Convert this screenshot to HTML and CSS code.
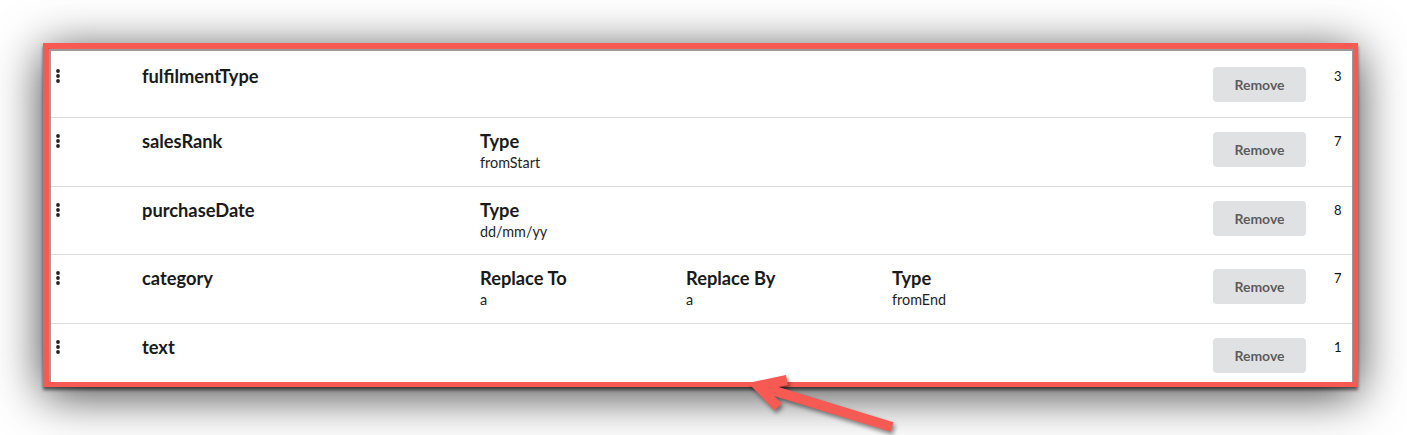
FILE: index.html
```html
<!DOCTYPE html>
<html lang="en">
<head>
<meta charset="utf-8">
<title>Fields</title>
<link rel="stylesheet" href="styles.css">
</head>
<body>
<div class="stage">
  <div class="frame">
    <div class="card">
      <div class="row row--first">
        <div class="handle"><svg class="dots" width="4" height="14" viewBox="0 0 4 14"><circle cx="2" cy="2" r="1.9"/><circle cx="2" cy="7" r="1.9"/><circle cx="2" cy="12" r="1.9"/></svg></div>
        <div class="name">fulfilmentType</div>
        <div class="field"></div>
        <div class="field"></div>
        <div class="field"></div>
        <div class="spacer"></div>
        <button class="btn">Remove</button>
        <div class="num">3</div>
      </div>
      <div class="row">
        <div class="handle"><svg class="dots" width="4" height="14" viewBox="0 0 4 14"><circle cx="2" cy="2" r="1.9"/><circle cx="2" cy="7" r="1.9"/><circle cx="2" cy="12" r="1.9"/></svg></div>
        <div class="name">salesRank</div>
        <div class="field"><div class="label">Type</div><div class="value">fromStart</div></div>
        <div class="field"></div>
        <div class="field"></div>
        <div class="spacer"></div>
        <button class="btn">Remove</button>
        <div class="num">7</div>
      </div>
      <div class="row">
        <div class="handle"><svg class="dots" width="4" height="14" viewBox="0 0 4 14"><circle cx="2" cy="2" r="1.9"/><circle cx="2" cy="7" r="1.9"/><circle cx="2" cy="12" r="1.9"/></svg></div>
        <div class="name">purchaseDate</div>
        <div class="field"><div class="label">Type</div><div class="value">dd/mm/yy</div></div>
        <div class="field"></div>
        <div class="field"></div>
        <div class="spacer"></div>
        <button class="btn">Remove</button>
        <div class="num">8</div>
      </div>
      <div class="row">
        <div class="handle"><svg class="dots" width="4" height="14" viewBox="0 0 4 14"><circle cx="2" cy="2" r="1.9"/><circle cx="2" cy="7" r="1.9"/><circle cx="2" cy="12" r="1.9"/></svg></div>
        <div class="name">category</div>
        <div class="field"><div class="label">Replace To</div><div class="value">a</div></div>
        <div class="field"><div class="label">Replace By</div><div class="value">a</div></div>
        <div class="field"><div class="label">Type</div><div class="value">fromEnd</div></div>
        <div class="spacer"></div>
        <button class="btn">Remove</button>
        <div class="num">7</div>
      </div>
      <div class="row">
        <div class="handle"><svg class="dots" width="4" height="14" viewBox="0 0 4 14"><circle cx="2" cy="2" r="1.9"/><circle cx="2" cy="7" r="1.9"/><circle cx="2" cy="12" r="1.9"/></svg></div>
        <div class="name">text</div>
        <div class="field"></div>
        <div class="field"></div>
        <div class="field"></div>
        <div class="spacer"></div>
        <button class="btn">Remove</button>
        <div class="num">1</div>
      </div>
    </div>
  </div>
  <svg class="arrow" width="1407" height="435" viewBox="0 0 1407 435">
    <line x1="765" y1="388" x2="892" y2="427" />
    <polyline points="787,380 758,386 778,407" />
  </svg>
</div>
</body>
</html>
```

FILE: styles.css
```css
html, body {
  margin: 0;
  padding: 0;
  background: #ffffff;
  overflow: hidden;
}

body {
  font-family: Lato, "Open Sans", Arial, sans-serif;
  color: rgba(0, 0, 0, 0.87);
}

.stage {
  position: relative;
  width: 1407px;
  height: 435px;
  padding: 43px 0 0 43px;
  box-sizing: border-box;
}

.frame {
  width: 1315px;
  height: 344px;
  box-sizing: border-box;
  border-style: solid;
  border-color: #f65a52;
  border-width: 6px 5px 5px 6px;
  box-shadow: 0 3px 3px rgba(0, 0, 0, 0.55), 0 8px 45px rgba(0, 0, 0, 0.75);
  background: #fff;
}

.card {
  height: 100%;
  box-sizing: border-box;
  border-style: solid;
  border-color: #9a9a9a;
  border-width: 2px 1px 0 2px;
  overflow: hidden;
  background: #fff;
}

.row {
  display: grid;
  grid-template-columns: 91px 338px 206px 206px 206px 1fr 93px 46px;
  align-items: start;
  height: 67.67px;
  padding-top: 14px;
  box-sizing: content-box;
  border-bottom: 1px solid #dcdcdc;
}

.row + .row {
  height: 53.67px;
}

.row--first {
  height: 50px;
  padding-top: 16px;
}

.handle {
  padding-left: 5px;
  padding-top: 2px;
  height: 14px;
}

.dots {
  display: block;
  fill: #222;
}

.name,
.label {
  font-size: 18.3px;
  font-weight: 700;
  line-height: 18px;
  color: #1a1a1a;
}

.label {
  margin-bottom: 4px;
}

.value {
  font-size: 14.4px;
  line-height: 18px;
  color: #1f1f1f;
}

.btn {
  width: 93px;
  height: 35px;
  border: 0;
  border-radius: 4px;
  background: #e0e1e2;
  color: rgba(0, 0, 0, 0.62);
  font-family: Lato, "Open Sans", Arial, sans-serif;
  font-size: 14px;
  font-weight: 700;
  padding: 0;
  cursor: pointer;
}

.num {
  padding-left: 28px;
  font-size: 13px;
  line-height: 18px;
  color: #111;
}

.arrow {
  position: absolute;
  left: 0;
  top: 0;
  pointer-events: none;
  filter: drop-shadow(2px 3px 2px rgba(0, 0, 0, 0.45));
}

.arrow line,
.arrow polyline {
  fill: none;
  stroke: #f65a52;
  stroke-width: 10;
  stroke-linecap: butt;
  stroke-linejoin: miter;
}
```
